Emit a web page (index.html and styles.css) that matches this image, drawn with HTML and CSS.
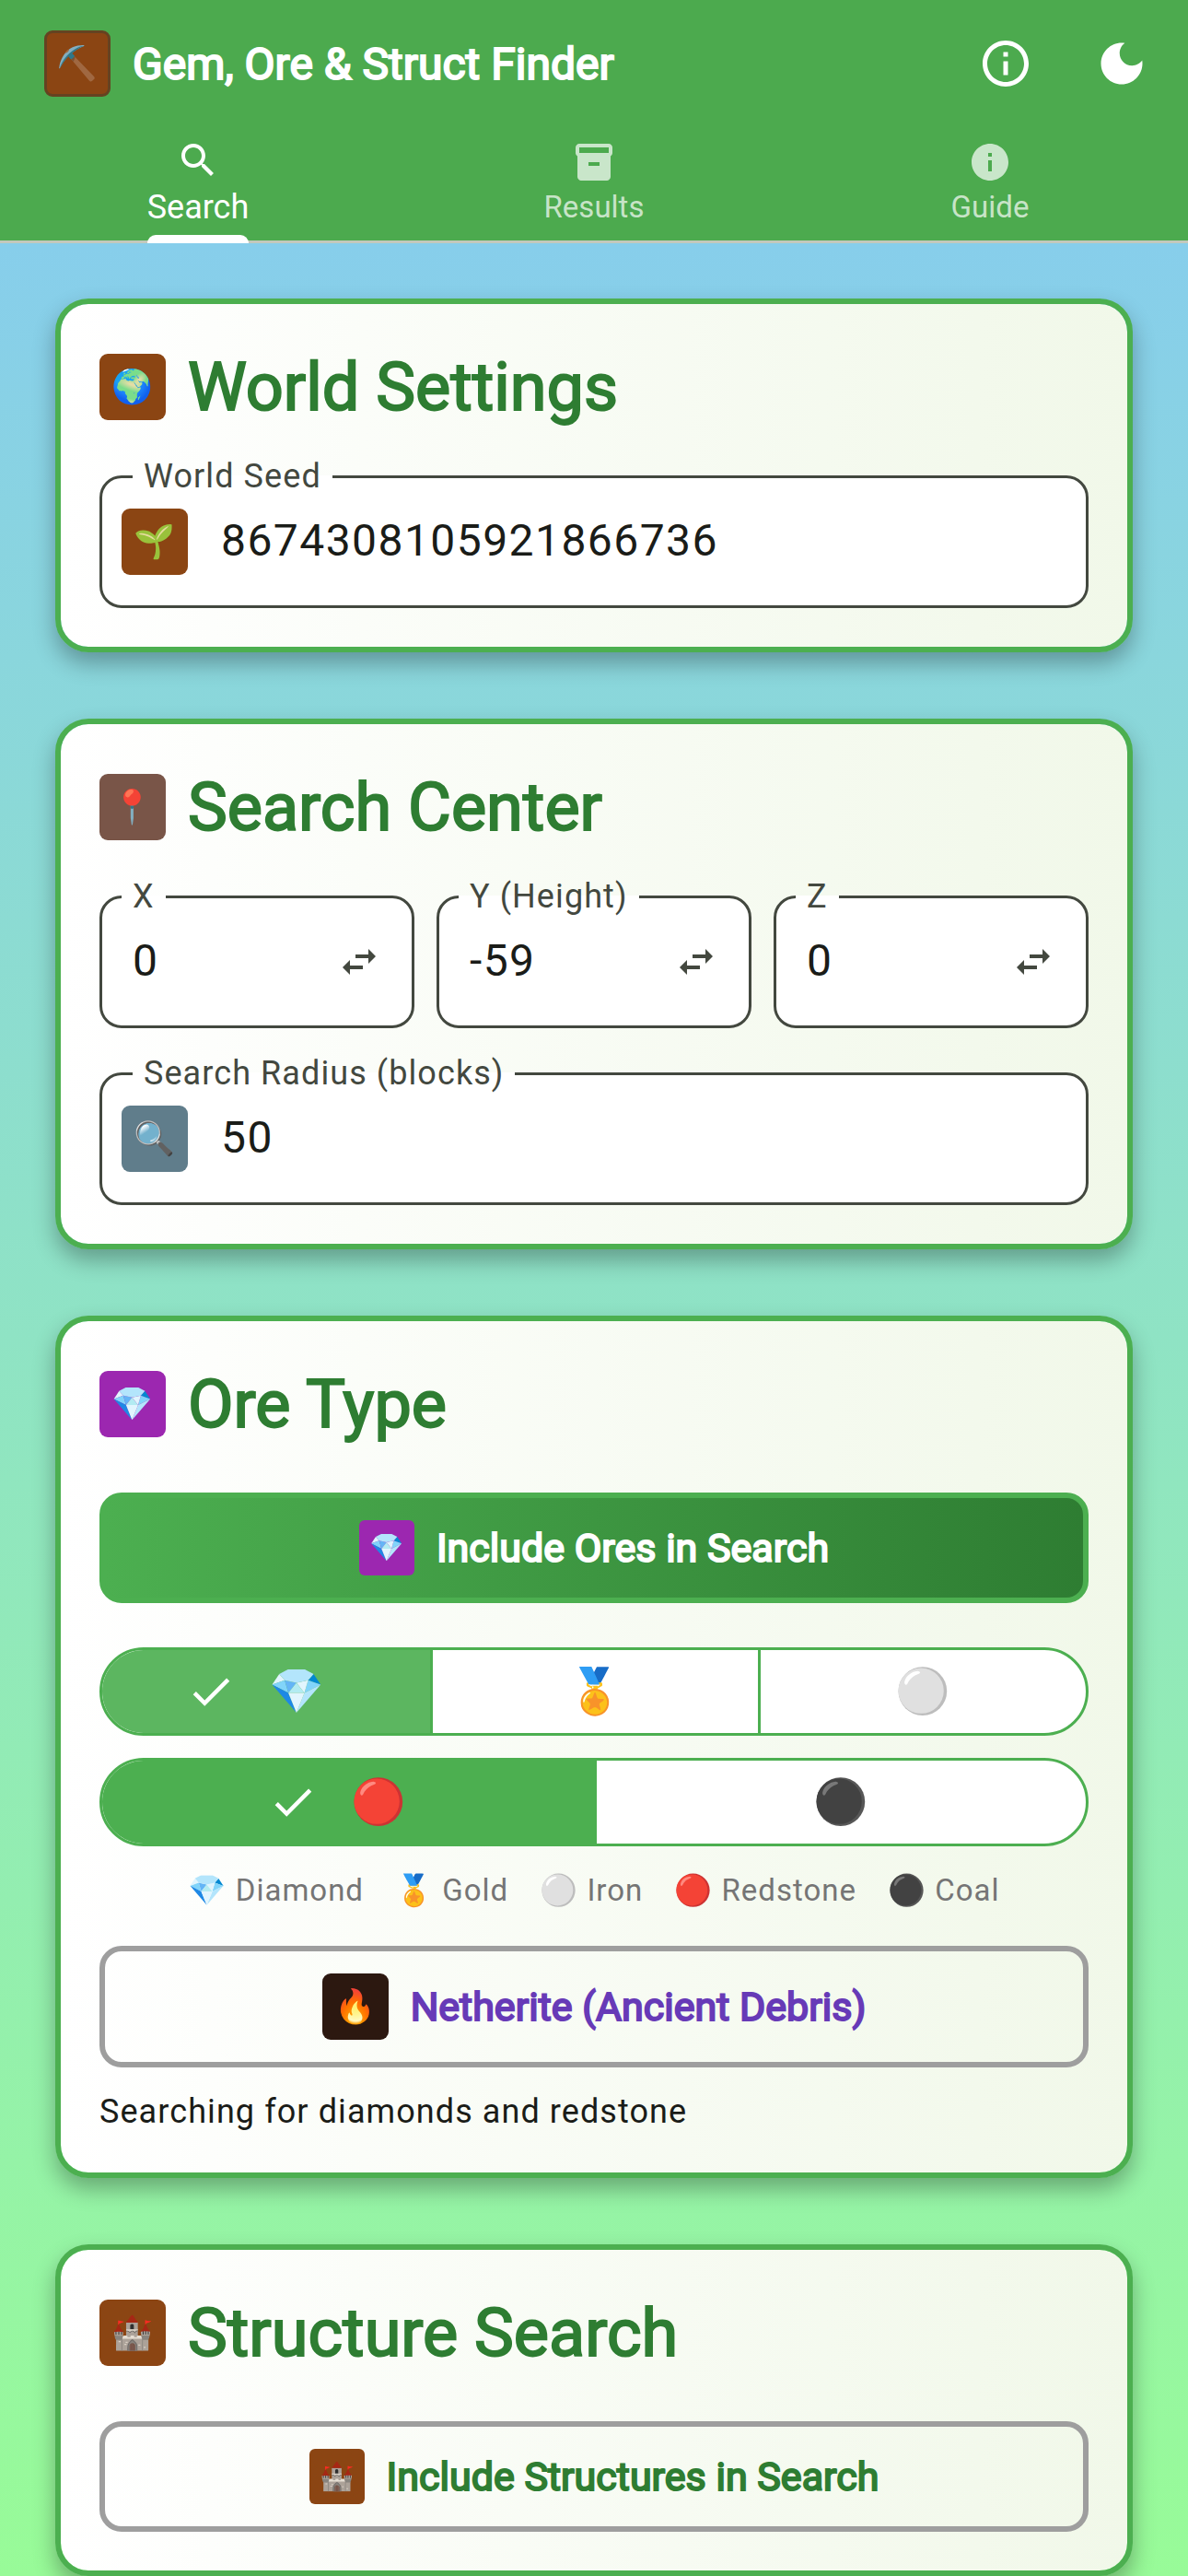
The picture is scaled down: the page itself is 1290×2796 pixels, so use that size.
FILE: index.html
```html
<!DOCTYPE html>
<html lang="en">
<head>
<meta charset="utf-8">
<meta name="viewport" content="width=device-width, initial-scale=1">
<title>Gem, Ore &amp; Struct Finder</title>
<link rel="stylesheet" href="styles.css">
</head>
<body>
<header class="app-header">
  <div class="app-bar">
    <span class="tile tile-earth tile-outlined">⛏️</span>
    <h1 class="app-title">Gem, Ore &amp; Struct Finder</h1>
    <div class="app-actions">
      <button class="icon-button" type="button" aria-label="About">
        <svg class="icon-large" viewBox="0 0 24 24"><path d="M11 7h2v2h-2zm0 4h2v6h-2zm1-9C6.48 2 2 6.48 2 12s4.48 10 10 10 10-4.48 10-10S17.52 2 12 2zm0 18c-4.41 0-8-3.59-8-8s3.59-8 8-8 8 3.59 8 8-3.59 8-8 8z"/></svg>
      </button>
      <button class="icon-button" type="button" aria-label="Dark mode">
        <svg class="icon-large" viewBox="0 0 24 24"><path d="M12 3c-4.97 0-9 4.03-9 9s4.03 9 9 9 9-4.03 9-9c0-.46-.04-.92-.1-1.36-.98 1.37-2.58 2.26-4.4 2.26-2.98 0-5.4-2.42-5.4-5.4 0-1.81.89-3.42 2.26-4.4-.44-.06-.9-.1-1.36-.1z"/></svg>
      </button>
    </div>
  </div>
  <nav class="tabs">
    <a class="tab tab-active" href="#search">
      <svg class="icon" viewBox="0 0 24 24"><path d="M15.5 14h-.79l-.28-.27C15.41 12.59 16 11.11 16 9.5 16 5.91 13.09 3 9.5 3S3 5.91 3 9.5 5.91 16 9.5 16c1.61 0 3.09-.59 4.23-1.57l.27.28v.79l5 4.99L20.49 19l-4.99-5zm-6 0C7.01 14 5 11.99 5 9.5S7.01 5 9.5 5 14 7.01 14 9.5 11.99 14 9.5 14z"/></svg>
      <span class="tab-label">Search</span>
    </a>
    <a class="tab" href="#results">
      <svg class="icon" viewBox="0 0 24 24"><path d="M20 2H4c-1 0-2 .9-2 2v3.01c0 .72.43 1.34 1 1.69V20c0 1.1 1.1 2 2 2h14c.9 0 2-.9 2-2V8.7c.57-.35 1-.97 1-1.69V4c0-1.1-1-2-2-2zm-5 12H9v-2h6v2zm5-7H4V4h16v3z"/></svg>
      <span class="tab-label">Results</span>
    </a>
    <a class="tab" href="#guide">
      <svg class="icon" viewBox="0 0 24 24"><path d="M12 2C6.48 2 2 6.48 2 12s4.48 10 10 10 10-4.48 10-10S17.52 2 12 2zm1 15h-2v-6h2v6zm0-8h-2V7h2v2z"/></svg>
      <span class="tab-label">Guide</span>
    </a>
  </nav>
</header>

<main class="content" id="search">
  <section class="card">
    <h2 class="card-title"><span class="tile tile-earth">🌍</span>World Settings</h2>
    <fieldset class="field field-icon">
      <legend><label for="seed">World Seed</label></legend>
      <div class="field-row">
        <span class="tile tile-earth">🌱</span>
        <input id="seed" type="text" value="8674308105921866736">
      </div>
    </fieldset>
  </section>

  <section class="card">
    <h2 class="card-title"><span class="tile tile-clay">📍</span>Search Center</h2>
    <div class="coords">
      <fieldset class="field">
        <legend><label for="x">X</label></legend>
        <div class="field-row">
          <input id="x" type="text" value="0">
          <button class="swap" type="button" aria-label="Flip sign of X"><svg class="icon" viewBox="0 0 24 24"><path d="M6.99 11L3 15l3.99 4v-3H14v-2H6.99v-3zM21 9l-3.99-4v3H10v2h7.01v3L21 9z"/></svg></button>
        </div>
      </fieldset>
      <fieldset class="field">
        <legend><label for="y">Y (Height)</label></legend>
        <div class="field-row">
          <input id="y" type="text" value="-59">
          <button class="swap" type="button" aria-label="Flip sign of Y"><svg class="icon" viewBox="0 0 24 24"><path d="M6.99 11L3 15l3.99 4v-3H14v-2H6.99v-3zM21 9l-3.99-4v3H10v2h7.01v3L21 9z"/></svg></button>
        </div>
      </fieldset>
      <fieldset class="field">
        <legend><label for="z">Z</label></legend>
        <div class="field-row">
          <input id="z" type="text" value="0">
          <button class="swap" type="button" aria-label="Flip sign of Z"><svg class="icon" viewBox="0 0 24 24"><path d="M6.99 11L3 15l3.99 4v-3H14v-2H6.99v-3zM21 9l-3.99-4v3H10v2h7.01v3L21 9z"/></svg></button>
        </div>
      </fieldset>
    </div>
    <fieldset class="field field-icon">
      <legend><label for="radius">Search Radius (blocks)</label></legend>
      <div class="field-row">
        <span class="tile tile-slate">🔍</span>
        <input id="radius" type="text" value="50">
      </div>
    </fieldset>
  </section>

  <section class="card">
    <h2 class="card-title"><span class="tile tile-gem">💎</span>Ore Type</h2>
    <button class="toggle toggle-on" type="button"><span class="tile tile-small tile-gem">💎</span>Include Ores in Search</button>
    <div class="segments segments-first">
      <label class="segment segment-focus"><input type="checkbox" aria-label="Diamond" checked><svg class="check" viewBox="0 0 24 24"><path d="M9 16.17L4.83 12l-1.42 1.41L9 19 21 7l-1.41-1.41z"/></svg><span>💎</span></label>
      <label class="segment"><input type="checkbox" aria-label="Gold"><svg class="check" viewBox="0 0 24 24"><path d="M9 16.17L4.83 12l-1.42 1.41L9 19 21 7l-1.41-1.41z"/></svg><span>🏅</span></label>
      <label class="segment"><input type="checkbox" aria-label="Iron"><svg class="check" viewBox="0 0 24 24"><path d="M9 16.17L4.83 12l-1.42 1.41L9 19 21 7l-1.41-1.41z"/></svg><span>⚪</span></label>
    </div>
    <div class="segments">
      <label class="segment"><input type="checkbox" aria-label="Redstone" checked><svg class="check" viewBox="0 0 24 24"><path d="M9 16.17L4.83 12l-1.42 1.41L9 19 21 7l-1.41-1.41z"/></svg><span>🔴</span></label>
      <label class="segment"><input type="checkbox" aria-label="Coal"><svg class="check" viewBox="0 0 24 24"><path d="M9 16.17L4.83 12l-1.42 1.41L9 19 21 7l-1.41-1.41z"/></svg><span>⚫</span></label>
    </div>
    <ul class="key">
      <li>💎 Diamond</li>
      <li>🏅 Gold</li>
      <li>⚪ Iron</li>
      <li>🔴 Redstone</li>
      <li>⚫ Coal</li>
    </ul>
    <button class="toggle toggle-nether" type="button"><span class="tile tile-nether">🔥</span>Netherite (Ancient Debris)</button>
    <p class="summary">Searching for diamonds and redstone</p>
  </section>

  <section class="card">
    <h2 class="card-title"><span class="tile tile-earth">🏰</span>Structure Search</h2>
    <button class="toggle" type="button"><span class="tile tile-small tile-earth">🏰</span>Include Structures in Search</button>
  </section>
</main>
</body>
</html>
```
FILE: styles.css
```css
* {
  box-sizing: border-box;
}

body {
  margin: 0;
  min-height: 100vh;
  display: flex;
  flex-direction: column;
  font-family: Roboto, "Noto Color Emoji", sans-serif;
  color: #1a1c18;
}

h1, h2, p, ul {
  margin: 0;
  padding: 0;
}

button, input {
  font-family: inherit;
  color: inherit;
}

button {
  cursor: pointer;
}

/* Header */
.app-header {
  background: #4caa4e;
  border-bottom: 3px solid #c3c8bc;
  color: #fff;
}

.app-bar {
  display: flex;
  align-items: center;
  gap: 24px;
  height: 138px;
  padding: 0 42px 0 48px;
}

.app-title {
  font-size: 48px;
  font-weight: 400;
  -webkit-text-stroke: 2px currentColor;
}

.app-actions {
  display: flex;
  gap: 66px;
  margin-left: auto;
}

.icon-button, .swap {
  display: flex;
  padding: 0;
  border: 0;
  background: none;
}

.icon, .icon-large, .check {
  display: block;
  flex: none;
  fill: currentColor;
}

.icon {
  width: 48px;
  height: 48px;
}

.icon-large {
  width: 60px;
  height: 60px;
}

.tabs {
  display: grid;
  grid-template-columns: repeat(3, 1fr);
  margin-bottom: -3px;
}

.tab {
  display: flex;
  flex-direction: column;
  align-items: center;
  gap: 4px;
  height: 126px;
  padding-top: 14px;
  color: rgba(255, 255, 255, 0.7);
  font-size: 33px;
  line-height: 42px;
  text-decoration: none;
}

.tab-active {
  gap: 6px;
  padding-top: 12px;
  color: #fff;
  font-size: 36px;
}

.tab-label {
  flex: 1;
}

.tab-active .tab-label {
  display: flex;
  flex-direction: column;
  justify-content: space-between;
}

.tab-active .tab-label::after {
  content: "";
  height: 9px;
  border-radius: 9px 9px 0 0;
  background: #fff;
}

/* Tiles */
.tile {
  display: flex;
  flex: none;
  align-items: center;
  justify-content: center;
  width: 72px;
  height: 72px;
  border-radius: 9px;
  font-size: 36px;
  line-height: 1;
  -webkit-text-stroke: 0;
}

.tile-small {
  width: 60px;
  height: 60px;
  border-radius: 6px;
  font-size: 30px;
}

.tile-outlined {
  border: 3px solid #654321;
}

.tile-earth { background: #8b4513; }
.tile-clay { background: #795548; }
.tile-slate { background: #607d8b; }
.tile-gem { background: #9c27b0; }
.tile-nether { background: #2c1810; }

/* Cards */
.content {
  flex: 1;
  display: flex;
  flex-direction: column;
  gap: 72px;
  padding: 60px 60px 0;
  background: linear-gradient(#87ceeb, #98fb98);
}

.card {
  padding: 42px;
  border: 6px solid #4caf50;
  border-radius: 36px;
  background: linear-gradient(90deg, #fff, #f1f8e9) padding-box;
  box-shadow: 0 12px 24px rgba(0, 0, 0, 0.3);
}

.card-title {
  display: flex;
  align-items: center;
  gap: 24px;
  height: 96px;
  color: #2e7d32;
  font-size: 72px;
  font-weight: 400;
  -webkit-text-stroke: 2px currentColor;
}

/* Text fields */
.field {
  min-width: 0;
  margin: 30px 0 0;
  padding: 0 33px 0 21px;
  border: 3px solid #43483f;
  border-radius: 24px;
  background: #fff;
}

.field legend {
  height: 39px;
  padding: 0 12px;
  color: #43483f;
  font-size: 36px;
  line-height: 39px;
  letter-spacing: 0.03em;
}

.field-icon legend {
  margin-left: 12px;
}

.field-row {
  display: flex;
  align-items: center;
  padding: 15px 0 33px;
}

.field-row input {
  flex: 1;
  min-width: 0;
  height: 72px;
  padding: 0 12px 3px;
  border: 0;
  outline: 0;
  background: none;
  font-size: 48px;
  letter-spacing: 0.03em;
}

.field-icon .field-row input {
  padding-left: 36px;
}

.swap {
  color: #43483f;
}

.coords {
  display: grid;
  grid-template-columns: repeat(3, 1fr);
  gap: 24px;
}

/* Toggle buttons */
.toggle {
  display: flex;
  align-items: center;
  justify-content: center;
  gap: 24px;
  width: 100%;
  margin-top: 48px;
  padding: 24px;
  border: 6px solid #9e9e9e;
  border-radius: 24px;
  background: none;
  color: #2e7d32;
  font-size: 43px;
  -webkit-text-stroke: 2px currentColor;
}

.toggle-on {
  border-color: #4caf50;
  background: linear-gradient(90deg, #4caf50, #2e7d32);
  color: #fff;
}

.toggle-nether {
  margin-top: 36px;
  color: #673ab7;
}

/* Ore choices */
.segments {
  display: grid;
  grid-auto-flow: column;
  grid-auto-columns: 1fr;
  height: 96px;
  margin-top: 24px;
  overflow: hidden;
  border: 3px solid #4caf50;
  border-radius: 48px;
  background: #fff;
}

.segments-first {
  margin-top: 48px;
}

.segment {
  display: flex;
  align-items: center;
  justify-content: center;
  gap: 36px;
  font-size: 48px;
  line-height: 60px;
  cursor: pointer;
}

.segment + .segment {
  border-left: 3px solid #4caf50;
}

.segment input {
  appearance: none;
  position: absolute;
  margin: 0;
}

.check {
  display: none;
  width: 54px;
  height: 54px;
  color: #fff;
}

.segment:has(:checked) {
  padding-right: 24px;
  background: #4caf50;
}

.segment-focus:has(:checked) {
  background: #5cb660;
}

.segment :checked + .check {
  display: block;
}

.key {
  display: flex;
  flex-wrap: wrap;
  justify-content: center;
  gap: 0 34px;
  margin-top: 24px;
  color: #757575;
  font-size: 33px;
  line-height: 48px;
  letter-spacing: 0.03em;
  list-style: none;
}

.summary {
  margin-top: 24px;
  font-size: 36px;
  line-height: 48px;
  letter-spacing: 0.03em;
}
```
